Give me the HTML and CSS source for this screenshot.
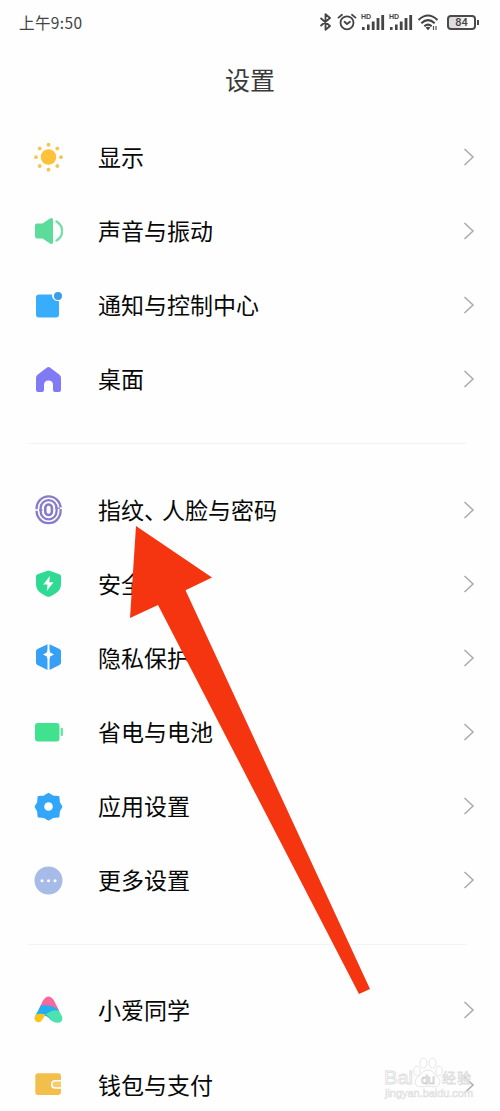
FILE: index.html
```html
<!DOCTYPE html>
<html lang="zh-CN">
<head>
<meta charset="utf-8">
<title>设置</title>
<link rel="stylesheet" href="styles.css">
</head>
<body>
<svg class="defs" width="0" height="0"><defs>
<symbol id="chevron" viewBox="0 0 12 20"><path d="M1.500 2 L10 10 L1.500 18" fill="none" stroke="#aaa" stroke-width="1.500"/></symbol>
<symbol id="bars" viewBox="0 0 24 18"><g fill="#444"><rect x="1" y="14" width="2.600" height="3"/><rect x="6" y="11.500" width="2.600" height="5.500"/><rect x="10.800" y="8.500" width="2.800" height="8.500"/><rect x="15.600" y="5" width="2.800" height="12"/><rect x="20.300" y="2" width="2.800" height="15"/></g></symbol>
</defs></svg>
<div class="phone">
  <header class="status">
    <span class="time">上午9:50</span>
    <div class="indicators">
      <svg class="bt" viewBox="0 0 13 18" width="13" height="18"><path d="M1.500 5 L11 13 L6.500 16.800 V1.200 L11 5 L1.500 13" fill="none" stroke="#444" stroke-width="1.800" stroke-linejoin="round"/></svg>
      <svg class="alarm" viewBox="0 0 20 18" width="20" height="18"><g fill="none" stroke="#444" stroke-width="1.800" stroke-linecap="round"><circle cx="10" cy="9.800" r="6.500"/><path d="M1.500 4.600 L5 1.800 M18.500 4.600 L15 1.800 M7.500 8.800 L10 11 L13 8.800"/></g></svg>
      <span class="signal"><svg width="24" height="18"><use href="#bars"/></svg><i>HD</i></span>
      <span class="signal"><svg width="24" height="18"><use href="#bars"/></svg><i>HD</i></span>
      <svg class="wifi" viewBox="0 0 22 18" width="22" height="18"><g fill="none" stroke="#444" stroke-width="2"><path d="M1.500 7 Q11 -2 20.500 7"/><path d="M4.300 10.200 Q11 4 17.700 10.200"/><path d="M7.300 13.200 Q11 10 14.700 13.200"/></g><path d="M8.500 14.500 Q11 12.800 13.500 14.500 L11 17.200Z" fill="#444"/><path d="M16.500 13 V17 M19 13 V17" stroke="#555" stroke-width="1.200"/></svg>
      <span class="battery">84</span>
    </div>
  </header>
  <h1 class="title">设置</h1>
  <ul class="group">
    <li class="row"><svg class="icon" viewBox="0 0 30 30"><circle cx="15.500" cy="14" r="7.800" fill="#fdc13a"/><g fill="#f3c654"><circle cx="15.500" cy="1.800" r="1.900"/><circle cx="15.500" cy="26.700" r="1.900"/><circle cx="3" cy="14.200" r="1.900"/><circle cx="28" cy="14.200" r="1.900"/><circle cx="6.700" cy="5.400" r="1.900"/><circle cx="24.300" cy="5.400" r="1.900"/><circle cx="6.700" cy="23" r="1.900"/><circle cx="24.300" cy="23" r="1.900"/></g></svg><span class="label">显示</span><svg class="chevron"><use href="#chevron"/></svg></li>
    <li class="row"><svg class="icon" viewBox="0 0 30 30"><path d="M4 6.500 H9.500 L17 1.500 Q20 0 20 3 V25 Q20 28 17 26.500 L9.500 21.500 H4 Q2 21.500 2 19.500 V8.500 Q2 6.500 4 6.500Z" fill="#5bdc9b"/><path d="M23.500 4.500 C31 9 31 19 23.500 23.500" fill="none" stroke="#73dfaa" stroke-width="2.300" stroke-linecap="round"/></svg><span class="label">声音与振动</span><svg class="chevron"><use href="#chevron"/></svg></li>
    <li class="row"><svg class="icon" viewBox="0 0 30 30"><path d="M6 3.500 H19 Q18.500 10 26 10.200 V23.500 Q26 26.500 23 26.500 H6 Q3 26.500 3 23.500 V6.500 Q3 3.500 6 3.500Z" fill="#38adfb"/><circle cx="25" cy="5" r="4" fill="#399feb"/></svg><span class="label">通知与控制中心</span><svg class="chevron"><use href="#chevron"/></svg></li>
    <li class="row"><svg class="icon" viewBox="0 0 30 30"><path d="M14 2.500 Q15.500 1.300 17 2.500 L26.500 9.800 Q28 11 28 13 V25 Q28 27 26 27 H22 Q20 27 20 25 V20 Q20 15.500 15.500 15.500 Q11 15.500 11 20 V25 Q11 27 9 27 H5 Q3 27 3 25 V13 Q3 11 4.500 9.800Z" fill="#807bf5"/></svg><span class="label">桌面</span><svg class="chevron"><use href="#chevron"/></svg></li>
  </ul>
  <hr class="divider">
  <ul class="group">
    <li class="row"><svg class="icon" viewBox="0 0 30 30"><g fill="none" stroke="#897bcb" stroke-width="2.300"><rect x="3.600" y="1.300" width="24" height="26.800" rx="12"/><rect x="7.600" y="5.100" width="16" height="19.200" rx="8"/><rect x="12.300" y="9.500" width="6.600" height="10.500" rx="3.300" stroke-width="2.600"/></g><path d="M2 15 H6.500 M24.800 13.200 H29" stroke="#fff" stroke-width="1.500"/><path d="M6 15 H9.500 M22 13.200 H27" stroke="#897bcb" stroke-width="1.300"/></svg><span class="label">指纹<span class="comma">、</span>人脸与密码</span><svg class="chevron"><use href="#chevron"/></svg></li>
    <li class="row"><svg class="icon" viewBox="0 0 30 30"><path d="M14.500 1.700 Q15.500 1.200 16.500 1.700 L26.500 5.200 Q28 5.800 28 7.500 V15 C28 22 22.500 25 16.500 27.700 Q15.500 28 14.500 27.700 C8.500 25 3 22 3 15 V7.500 Q3 5.800 4.500 5.200Z" fill="#2fda93"/><path d="M16.800 7 L10.300 15.500 H14.500 L13.800 22 L20.500 13.300 H16.300Z" fill="#fff"/></svg><span class="label">安全</span><svg class="chevron"><use href="#chevron"/></svg></li>
    <li class="row"><svg class="icon" viewBox="0 0 30 30"><path d="M14.500 1.200 L4.500 6 Q3 6.800 3 8.500 V19.500 Q3 21.300 4.500 22 L14.500 27Z M16.500 1.200 L26.500 6 Q28 6.800 28 8.500 V19.500 Q28 21.300 26.500 22 L16.500 27Z" fill="#369ff6"/><path d="M15.500 5 L17.200 9.500 L21 11.500 L17.200 13.500 L15.500 18 L13.800 13.500 L10 11.500 L13.800 9.500Z" fill="#fff"/></svg><span class="label">隐私保护</span><svg class="chevron"><use href="#chevron"/></svg></li>
    <li class="row"><svg class="icon" viewBox="0 0 30 30"><rect x="2" y="5" width="24.500" height="18.500" rx="3" fill="#40e28f"/><rect x="27.500" y="9.700" width="2.500" height="8.300" rx="1" fill="#75dfa8"/></svg><span class="label">省电与电池</span><svg class="chevron"><use href="#chevron"/></svg></li>
    <li class="row"><svg class="icon" viewBox="0 0 30 30"><path d="M15.500 1.700 L19.700 4.300 L25.500 4.900 L26 10.500 L28.500 14.700 L26 19 L25.500 24.700 L19.700 25.200 L15.500 27.700 L11.300 25.200 L5.500 24.700 L5 19 L2.500 14.700 L5 10.500 L5.500 4.900 L11.300 4.300Z" fill="#32a6f8" stroke="#32a6f8" stroke-width="1.800" stroke-linejoin="round"/><circle cx="15.500" cy="14.500" r="4.300" fill="#fff"/></svg><span class="label">应用设置</span><svg class="chevron"><use href="#chevron"/></svg></li>
    <li class="row"><svg class="icon" viewBox="0 0 30 30"><circle cx="15.500" cy="14.500" r="14" fill="#a7bbe9"/><g fill="#fff"><circle cx="9" cy="14.700" r="1.500"/><circle cx="15.500" cy="14.700" r="1.500"/><circle cx="22" cy="14.700" r="1.500"/></g></svg><span class="label">更多设置</span><svg class="chevron"><use href="#chevron"/></svg></li>
  </ul>
  <hr class="divider">
  <ul class="group">
    <li class="row"><svg class="icon" viewBox="0 0 30 30"><path d="M10 4.500 Q15.500 -3.500 21 4.500 L26.500 15.500 Q15 8 6 13Z" fill="#f8689f"/><path d="M7.800 9.500 Q19 8 25.500 14 L18 24.500 Q15 18 2.500 19.500Z" fill="#22aeef"/><path d="M2.800 18.500 Q8 17 12.500 18.500 L9.500 23.500 Q7 27.500 3.500 25.700 Q0 23 2.800 18.500Z" fill="#fac51b"/><path d="M12.500 18.800 Q20 13 26 14.800 L29 20.500 Q30.500 26 25 26.800 Q19.500 27 17.500 23 Q15.500 19.500 12.500 18.800Z" fill="#4de3ae"/></svg><span class="label">小爱同学</span><svg class="chevron"><use href="#chevron"/></svg></li>
    <li class="row"><svg class="icon" viewBox="0 0 30 30"><path d="M5 3.300 H25 Q28 3.300 28 6.300 V22 Q28 25 25 25 H5 Q2.300 25 2.300 22 V6.300 Q2.300 3.300 5 3.300Z" fill="#f3bf4c"/><path d="M28 10.800 H22.500 Q18.700 10.800 18.700 14.500 Q18.700 18 22.500 18 H28" fill="#f4cc72" stroke="#fff" stroke-width="1.600"/></svg><span class="label">钱包与支付</span><svg class="chevron"><use href="#chevron"/></svg></li>
  </ul>
  <svg class="arrow" viewBox="0 0 240 468"><path d="M6 0 L82 51.500 L55.500 64.200 L240 463 L229 468 L28 79 L0 92Z" fill="#f53410"/></svg>
  <svg class="watermark" viewBox="0 0 96 46"><g fill="#fff" fill-opacity=".8" stroke="#dedede" stroke-width=".8"><ellipse cx="34" cy="15" rx="3.200" ry="4.700"/><ellipse cx="40.500" cy="7" rx="3.500" ry="5"/><ellipse cx="49.500" cy="7" rx="3.500" ry="5"/><ellipse cx="56" cy="15" rx="3.200" ry="4.700"/><path d="M45 14 Q50 14 53 20 Q59 24 56 29 Q53 32 45 30 Q37 32 33 29 Q30 24 37 19 Q40 14 45 14Z"/><text x="1" y="28" font-size="18" textLength="29" lengthAdjust="spacingAndGlyphs">Bai</text><text x="38" y="27.500" font-size="13" textLength="14" stroke="#d0d0d0">du</text><text x="59" y="26.500" font-size="14" textLength="29">经验</text><text x="2" y="41" font-size="10" stroke-width=".6" textLength="88" lengthAdjust="spacingAndGlyphs">jingyan.baidu.com</text></g></svg>
</div>
</body>
</html>
```
FILE: styles.css
```css
* { box-sizing: border-box; }
body { margin: 0; background: #fefefe; font-family: "Noto Sans CJK SC", sans-serif; color: #080808; }
.defs { position: absolute; }
.phone { position: relative; width: 500px; height: 1111px; overflow: hidden; }
.status { height: 44px; padding: 0 22px 0 19px; display: flex; align-items: center; justify-content: space-between; color: #444; }
.time { font-size: 15.500px; line-height: 22px; letter-spacing: .4px; }
.indicators { display: flex; align-items: center; height: 18px; }
.bt { margin-right: 5px; }
.alarm { margin-right: 4px; }
.signal { position: relative; width: 24px; height: 18px; margin-right: 4px; }
.signal svg { display: block; }
.signal i { position: absolute; left: 0; top: 0; font: 700 7px/8px "Liberation Sans", sans-serif; }
.wifi { margin-right: 8px; }
.battery { position: relative; width: 29px; height: 15px; margin-right: 2px; border: 2px solid #4a4a4a; border-radius: 4px; background: linear-gradient(90deg, #ddd 30%, #fefefe 80%); font: 500 11px/11px Roboto, sans-serif; text-align: center; }
.battery::after { content: ""; position: absolute; right: -5px; top: 3px; width: 2px; height: 5px; background: #4a4a4a; }
.title { margin: 0; height: 76px; padding-top: 17px; font-size: 25px; line-height: 37px; font-weight: 400; text-align: center; color: #3a3a3a; }
.group { margin: 0; padding: 0; list-style: none; }
.row { height: 74.150px; padding: 0 25px 0 33px; display: flex; align-items: center; }
.icon { width: 30px; height: 30px; flex: none; margin-top: 1px; }
.label { margin-left: 35px; padding-bottom: 2px; flex: 1; font-size: 23px; line-height: 34px; white-space: nowrap; }
.comma { font-feature-settings: "halt"; margin-right: 6.500px; }
.chevron { width: 12px; height: 20px; flex: none; }
.divider { height: 1px; margin: 26.500px 33px 28.500px 28px; border: 0; background: #f3f3f3; }
.arrow { position: absolute; left: 130px; top: 526px; width: 240px; height: 468px; }
.watermark { position: absolute; left: 383px; top: 1056px; width: 96px; height: 46px; font-family: "Liberation Sans", "Noto Sans CJK SC", sans-serif; }
```
